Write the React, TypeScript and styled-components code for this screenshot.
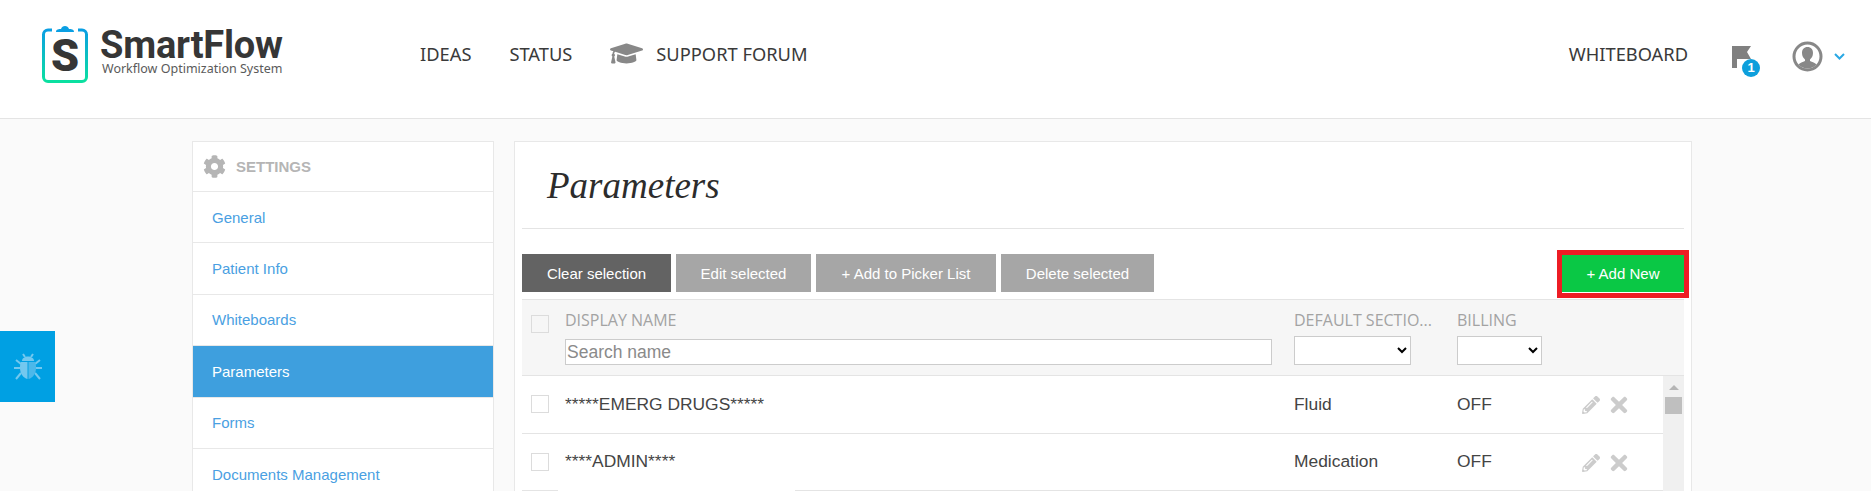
import React from 'react';
import styled, { createGlobalStyle } from 'styled-components';
import { FaCog, FaGraduationCap, FaPencilAlt, FaTimes } from 'react-icons/fa';

const GlobalStyle = createGlobalStyle`
  html, body {
    margin: 0;
    padding: 0;
    height: 491px;
    overflow: hidden;
    background: #fafafa;
    font-family: "Liberation Sans", Arial, sans-serif;
  }
  * { box-sizing: border-box; }
`;

const Header = styled.header`
  height: 119px;
  background: #fff;
  border-bottom: 1px solid #e4e4e4;
  display: flex;
  align-items: flex-start;
  padding: 23px 26px 0 42px;
`;

const Logo = styled.div`
  display: flex;
  gap: 12px;
  width: 378px;
`;

const LogoText = styled.div`
  display: flex;
  flex-direction: column;
  padding-top: 5px;
`;

const LogoTitle = styled.div`
  font-family: Roboto, sans-serif;
  font-weight: 700;
  font-size: 38px;
  line-height: 34px;
  letter-spacing: -0.2px;
  color: #363636;
`;

const LogoSub = styled.div`
  font-family: "Noto Sans", sans-serif;
  font-size: 12.5px;
  line-height: 14px;
  padding-left: 2px;
  color: #5a5a5a;
`;

const Nav = styled.nav`
  display: flex;
  align-items: center;
  height: 60px;
  flex: 1;
`;

const NavLink = styled.a<{ $gap?: number }>`
  display: flex;
  align-items: center;
  gap: 13px;
  font-family: "Noto Sans", sans-serif;
  font-size: 18.3px;
  color: #3a3a3a;
  margin-right: ${({ $gap }) => $gap ?? 0}px;
  svg { color: #888; }
`;

const NavRight = styled.div`
  display: flex;
  align-items: flex-start;
  height: 60px;
`;

const WhiteboardLink = styled(NavLink)`
  height: 60px;
`;

const FlagWrap = styled.div`
  position: relative;
  width: 28px;
  height: 31px;
  margin-left: 44px;
  margin-top: 23px;
  svg { display: block; }
`;

const FlagBadge = styled.span`
  position: absolute;
  left: 10px;
  top: 13px;
  width: 18px;
  height: 18px;
  border-radius: 50%;
  background: #0d9fdc;
  color: #fff;
  font-size: 13px;
  font-weight: 700;
  line-height: 18px;
  text-align: center;
`;

const UserMenu = styled.div`
  display: flex;
  align-items: center;
  gap: 11px;
  margin-left: 32px;
  margin-top: 18px;
`;

const Content = styled.main`
  display: flex;
  gap: 20px;
  padding: 22px 0 0 192px;
`;

const Sidebar = styled.aside`
  width: 302px;
  flex: none;
  background: #fff;
  border: 1px solid #e8e8e8;
`;

const SidebarHead = styled.div`
  height: 50px;
  display: flex;
  align-items: center;
  gap: 10px;
  padding-left: 10px;
  font-size: 15px;
  font-weight: 700;
  color: #b5b5b5;
  border-bottom: 1px solid #e8e8e8;
`;

const SidebarItem = styled.a<{ $active?: boolean }>`
  display: flex;
  align-items: center;
  height: 51.4px;
  padding-left: 19px;
  font-size: 15px;
  color: ${({ $active }) => ($active ? '#fff' : '#4a9fe2')};
  background: ${({ $active }) => ($active ? '#3e9fde' : '#fff')};
  border-bottom: 1px solid #e8e8e8;
`;

const Panel = styled.section`
  width: 1178px;
  flex: none;
  height: 360px;
  background: #fff;
  border: 1px solid #e8e8e8;
  padding: 0 7px;
`;

const Title = styled.h1`
  margin: 0;
  height: 87px;
  padding: 0 0 0 25px;
  display: flex;
  align-items: center;
  font-family: "Liberation Serif", Georgia, serif;
  font-style: italic;
  font-weight: 400;
  font-size: 37px;
  color: #2c2c2c;
  border-bottom: 1px solid #e4e4e4;
`;

const Toolbar = styled.div`
  display: flex;
  align-items: flex-start;
  gap: 5px;
  height: 70px;
  padding-top: 25px;
`;

const ToolButton = styled.button<{ $dark?: boolean; $width: number }>`
  width: ${({ $width }) => $width}px;
  height: 38px;
  border: 0;
  padding: 0;
  font-family: "Liberation Sans", Arial, sans-serif;
  font-size: 15px;
  color: #fff;
  background: ${({ $dark }) => ($dark ? '#636363' : '#a6a6a6')};
`;

const AddButton = styled.button`
  position: absolute;
  right: -5px;
  top: 21px;
  width: 132px;
  height: 48px;
  border: 5px solid #ed1c24;
  padding: 0 0 1px;
  font-family: "Liberation Sans", Arial, sans-serif;
  font-size: 15px;
  color: #fff;
  background: linear-gradient(#0ac845 0 37px, #fff 37px);
`;

const ToolbarWrap = styled.div`
  position: relative;
`;

const TableHead = styled.div`
  height: 77px;
  display: grid;
  grid-template-columns: 43px 707px 1fr;
  background: #f6f6f6;
  border-top: 1px solid #e4e4e4;
  border-bottom: 1px solid #e4e4e4;
`;

const Check = styled.span`
  display: block;
  width: 18px;
  height: 18px;
  margin-left: 9px;
  background: #fff;
  border: 1px solid #dcdcdc;
`;

const HeadCheck = styled(Check)`
  background: transparent;
  margin-top: 15px;
`;

const HeadCell = styled.div`
  display: flex;
  flex-direction: column;
`;

const HeadLabel = styled.div`
  font-family: "Open Sans", sans-serif;
  font-size: 16px;
  font-weight: 500;
  line-height: 20px;
  margin-top: 10px;
  color: #a3a3a3;
  white-space: nowrap;
`;

const SearchInput = styled.input`
  width: 707px;
  height: 26px;
  margin-top: 9px;
  padding: 0 1px;
  border: 1px solid #ccc;
  font-family: "Liberation Sans", Arial, sans-serif;
  font-size: 17.5px;
  background: #fff;
  outline: none;
  &::placeholder { color: #8a8a8a; }
`;

const Filters = styled.div`
  display: flex;
  gap: 46px;
  padding-left: 22px;
`;

const FilterSelect = styled.select<{ $width: number }>`
  width: ${({ $width }) => $width}px;
  height: 29px;
  margin-top: 6px;
  border: 1px solid #ccc;
  background: #fff;
`;

const FilterCell = styled(HeadCell)<{ $width: number }>`
  width: ${({ $width }) => $width}px;
`;

const RowsArea = styled.div`
  position: relative;
  display: flex;
`;

const Rows = styled.div`
  flex: 1;
`;

const Row = styled.div`
  height: 57.5px;
  display: grid;
  grid-template-columns: 43px 729px 163px 125px 1fr;
  align-items: center;
  border-bottom: 1px solid #e4e4e4;
  font-size: 17.4px;
  color: #444;
`;

const Actions = styled.div`
  display: flex;
  align-items: center;
  gap: 7px;
  padding-top: 2px;
  color: #ccc;
`;

// white gap that sits over the second row's bottom line in the reference
const RuleGap = styled.span`
  position: absolute;
  left: 36px;
  top: 114px;
  width: 237px;
  height: 1px;
  background: #fff;
`;

const Scrollbar = styled.div`
  position: relative;
  width: 21px;
  height: 115px;
  background: #f0f0f0;
`;

const ScrollArrow = styled.span`
  position: absolute;
  top: 9px;
  left: 6px;
  border-left: 5px solid transparent;
  border-right: 5px solid transparent;
  border-bottom: 5px solid #b5b5b5;
`;

const ScrollThumb = styled.span`
  position: absolute;
  top: 21px;
  left: 2px;
  width: 17px;
  height: 17px;
  background: #bfbfbf;
`;

const BugTab = styled.div`
  position: fixed;
  left: 0;
  top: 331px;
  width: 55px;
  height: 71px;
  display: flex;
  align-items: center;
  justify-content: center;
  background: #00a0e3;
`;

const LogoMark = () => (
  <svg width="46" height="60" viewBox="0 0 46 60">
    <defs>
      <linearGradient id="clip" x1="0" y1="0" x2="0" y2="1">
        <stop offset="0" stopColor="#0a9fe3" />
        <stop offset="1" stopColor="#0be0a0" />
      </linearGradient>
    </defs>
    <path
      d="M10 7H6a4.500 4.500 0 0 0-4.500 4.500V54a4.500 4.500 0 0 0 4.500 4.500H40a4.500 4.500 0 0 0 4.500-4.500V11.500A4.500 4.500 0 0 0 40 7H36"
      fill="none"
      stroke="url(#clip)"
      strokeWidth="3"
    />
    <path d="M14 9c0-3 3-3 5-3c1-4 7-4 8 0c2 0 5 0 5 3z" fill="#0a9fe3" />
    <text x="23" y="48" textAnchor="middle" fontFamily="Roboto, sans-serif" fontWeight="900" fontSize="45" fill="#363636">S</text>
  </svg>
);

const BugIcon = () => (
  <svg width="30" height="28" viewBox="0 0 30 28" fill="none" stroke="#73c8ef" strokeWidth="2">
    <path d="M10 1l2 3M20 1l-2 3M3 7l5 4M27 7l-5 4M1 15h6M29 15h-6M3 26l5-6M27 26l-5-6" />
    <path d="M9 8c0-6 12-6 12 0z" fill="#73c8ef" stroke="none" />
    <path d="M8 9h6.500v17C10 25 7 20 7 15c0-2 0-4 1-6z" fill="#73c8ef" stroke="none" />
    <path d="M15.500 9H22c1 2 1 4 1 6c0 5-3 10-7.500 11z" fill="#4cb8ea" stroke="none" />
  </svg>
);

const FlagIcon = () => (
  <svg width="20" height="22" viewBox="0 0 20 22" fill="#808080">
    <path d="M0 0h19l-4 6 4 7H5v9H0z" />
  </svg>
);

const UserIcon = () => (
  <svg width="31" height="31" viewBox="0 0 31 31">
    <circle cx="15.500" cy="15.500" r="13.500" fill="#fff" stroke="#888" strokeWidth="3" />
    <path d="M15.500 6c3.500 0 5.500 2.500 5.500 6s-1.500 5-3 6.500v1.500c2 1.200 5.500 1.800 6.500 3.500a12 12 0 0 1-18 0c1-1.700 4.500-2.300 6.500-3.500v-1.500c-1.500-1.500-3-3-3-6.500s2-6 5.500-6z" fill="#888" />
  </svg>
);

const Chevron = () => (
  <svg width="11" height="7" viewBox="0 0 11 7" fill="none" stroke="#2aa8e4" strokeWidth="2">
    <path d="M1 1l4.500 4.500L10 1" />
  </svg>
);

const settingsItems = ['General', 'Patient Info', 'Whiteboards', 'Parameters', 'Forms', 'Documents Management'];

const parameters = [
  { name: '*****EMERG DRUGS*****', section: 'Fluid', billing: 'OFF' },
  { name: '****ADMIN****', section: 'Medication', billing: 'OFF' },
];

const App: React.FC = () => (
  <>
    <GlobalStyle />
    <Header>
      <Logo>
        <LogoMark />
        <LogoText>
          <LogoTitle>SmartFlow</LogoTitle>
          <LogoSub>Workflow Optimization System</LogoSub>
        </LogoText>
      </Logo>
      <Nav>
        <NavLink $gap={38}>IDEAS</NavLink>
        <NavLink $gap={38}>STATUS</NavLink>
        <NavLink>
          <FaGraduationCap size={33} />
          SUPPORT FORUM
        </NavLink>
      </Nav>
      <NavRight>
        <WhiteboardLink>WHITEBOARD</WhiteboardLink>
        <FlagWrap>
          <FlagIcon />
          <FlagBadge>1</FlagBadge>
        </FlagWrap>
        <UserMenu>
          <UserIcon />
          <Chevron />
        </UserMenu>
      </NavRight>
    </Header>
    <BugTab>
      <BugIcon />
    </BugTab>
    <Content>
      <Sidebar>
        <SidebarHead>
          <FaCog size={23} />
          SETTINGS
        </SidebarHead>
        {settingsItems.map((item) => (
          <SidebarItem key={item} $active={item === 'Parameters'}>
            {item}
          </SidebarItem>
        ))}
      </Sidebar>
      <Panel>
        <Title>Parameters</Title>
        <ToolbarWrap>
          <Toolbar>
            <ToolButton $dark $width={149}>Clear selection</ToolButton>
            <ToolButton $width={135}>Edit selected</ToolButton>
            <ToolButton $width={180}>+ Add to Picker List</ToolButton>
            <ToolButton $width={153}>Delete selected</ToolButton>
          </Toolbar>
          <AddButton>+ Add New</AddButton>
        </ToolbarWrap>
        <TableHead>
          <HeadCheck />
          <HeadCell>
            <HeadLabel>DISPLAY NAME</HeadLabel>
            <SearchInput placeholder="Search name" />
          </HeadCell>
          <Filters>
            <FilterCell $width={117}>
              <HeadLabel>DEFAULT SECTIO...</HeadLabel>
              <FilterSelect $width={117} />
            </FilterCell>
            <FilterCell $width={85}>
              <HeadLabel>BILLING</HeadLabel>
              <FilterSelect $width={85} />
            </FilterCell>
          </Filters>
        </TableHead>
        <RowsArea>
          <Rows>
            {parameters.map((row) => (
              <Row key={row.name}>
                <Check />
                <span>{row.name}</span>
                <span>{row.section}</span>
                <span>{row.billing}</span>
                <Actions>
                  <FaPencilAlt size={18} />
                  <FaTimes size={24} />
                </Actions>
              </Row>
            ))}
          </Rows>
          <RuleGap />
          <Scrollbar>
            <ScrollArrow />
            <ScrollThumb />
          </Scrollbar>
        </RowsArea>
      </Panel>
    </Content>
  </>
);

export default App;
